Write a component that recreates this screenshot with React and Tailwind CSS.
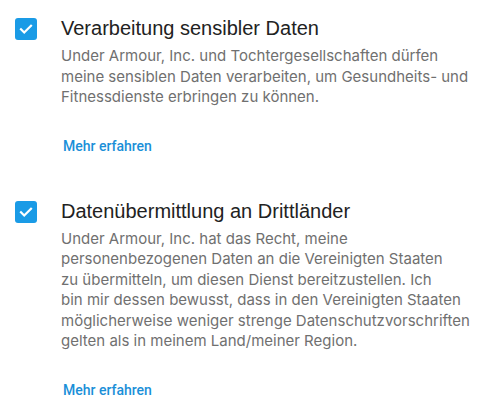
import React from "react";

function Check() {
  return (
    <div className="w-[22px] h-[22px] rounded-[3px] bg-[#1a9be6] flex items-center justify-center shrink-0">
      <svg width="16" height="16" viewBox="0 0 16 16" fill="none">
        <path d="M3 8.3l3.2 3.2L13 4.7" stroke="white" strokeWidth="2.2" strokeLinecap="square" />
      </svg>
    </div>
  );
}

function Section({ title, children, className }) {
  return (
    <div className={"flex " + (className || "")}>
      <div className="w-[61px] shrink-0 pl-[15px] pt-[3px]">
        <Check />
      </div>
      <div className="flex flex-col">
        <div className="text-[20px] leading-[26px] text-[#222222] font-['Liberation_Sans',sans-serif]">{title}</div>
        <div className="mt-[5px] text-[15px] leading-[20.5px] text-[#707070] font-['Inter',sans-serif]">
          {children}
        </div>
        <div className="mt-[28px] pl-[2px] text-[14px] leading-[20px] font-medium text-[#1a8fd8] font-['Roboto',sans-serif]">
          Mehr erfahren
        </div>
      </div>
    </div>
  );
}

export default function App() {
  return (
    <div className="w-[490px] h-[404px] bg-white overflow-hidden pt-[15px]">
      <Section title="Verarbeitung sensibler Daten">
        Under Armour, Inc. und Tochtergesellschaften dürfen<br />
        meine sensiblen Daten verarbeiten, um Gesundheits- und<br />
        Fitnessdienste erbringen zu können.
      </Section>
      <Section title="Datenübermittlung an Drittländer" className="mt-[42px]">
        Under Armour, Inc. hat das Recht, meine<br />
        personenbezogenen Daten an die Vereinigten Staaten<br />
        zu übermitteln, um diesen Dienst bereitzustellen. Ich<br />
        bin mir dessen bewusst, dass in den Vereinigten Staaten<br />
        möglicherweise weniger strenge Datenschutzvorschriften<br />
        gelten als in meinem Land/meiner Region.
      </Section>
    </div>
  );
}
